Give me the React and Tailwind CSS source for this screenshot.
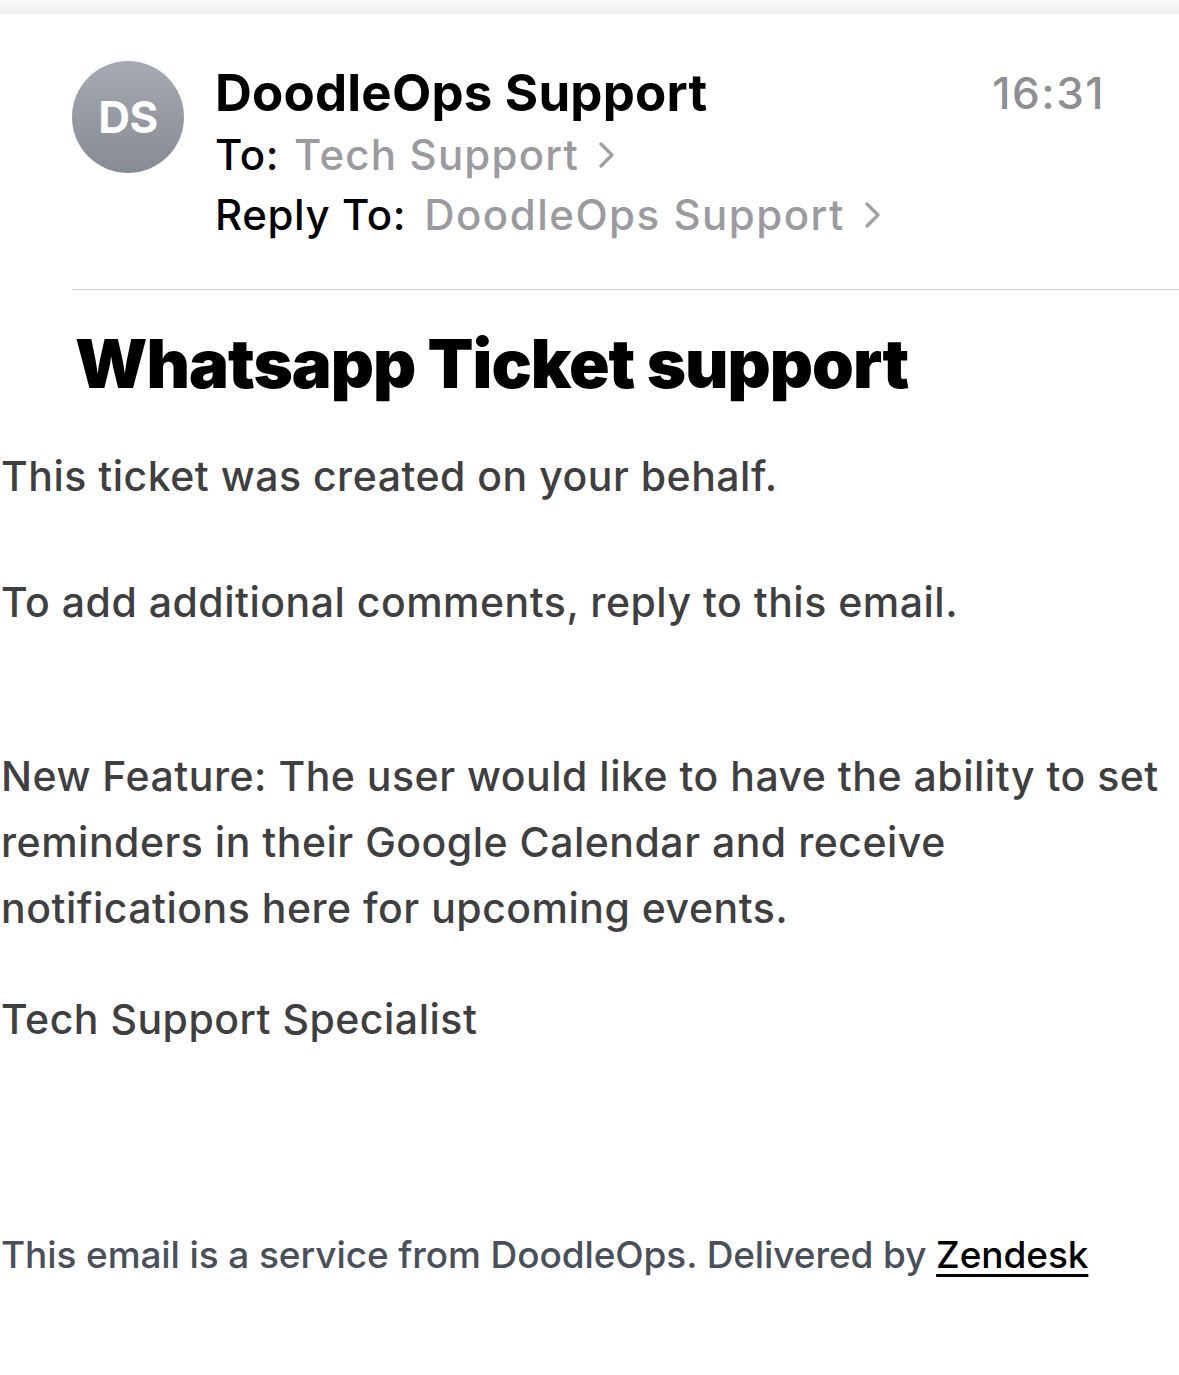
import React from 'react';

const Chevron = () => (
  <svg width="18" height="30" viewBox="0 0 18 30" className="ml-[18px] inline-block" fill="none">
    <path d="M4 4 L15 15 L4 26" stroke="#a1a1a6" strokeWidth="3.4" strokeLinecap="round" strokeLinejoin="round" />
  </svg>
);

export default function App() {
  return (
    <div className="min-h-[1375px] w-[1179px] bg-white font-['Inter',sans-serif] overflow-hidden">
      <div className="h-[14px] bg-gradient-to-b from-[#f8f8f8] to-[#f1f1f1]" />

      <div className="flex pl-[72px] pr-[74px] pt-[47px]">
        <div className="flex h-[112px] w-[112px] shrink-0 items-center justify-center rounded-full bg-gradient-to-b from-[#a6aab3] to-[#878b94]">
          <span className="text-[44px] font-bold tracking-[-0.5px] text-white">DS</span>
        </div>
        <div className="ml-[31px] flex-1">
          <div className="flex items-start justify-between">
            <div className="text-[51px] font-bold leading-[64px] tracking-[0.2px] text-black">DoodleOps Support</div>
            <div className="text-[44px] font-medium leading-[64px] tracking-[1.5px] text-[#8e8e93]">16:31</div>
          </div>
          <div className="flex items-center text-[42px] leading-[60px] tracking-[0.6px] text-black">
            <span className="font-medium">To:</span>
            <span className="ml-[15px] font-medium tracking-[1.2px] text-[#9b9b9f]">Tech Support</span>
            <Chevron />
          </div>
          <div className="flex items-center text-[42px] leading-[60px] tracking-[0.6px] text-black">
            <span className="font-medium">Reply To:</span>
            <span className="ml-[18px] font-medium tracking-[1.5px] text-[#9b9b9f]">DoodleOps Support</span>
            <Chevron />
          </div>
        </div>
      </div>

      <div className="ml-[72px] mt-[44px] h-px bg-[#cbcbcb]" />

      <h1 className="mt-[36px] pl-[75px] text-[67px] font-black leading-[76px] tracking-[-1px] text-black">
        Whatsapp Ticket support
      </h1>

      <div className="pl-[1px] pr-[10px] text-[41px] font-medium leading-[66px] text-[#3f3f3f] tracking-[0.5px]">
        <p className="mt-[41px]">This ticket was created on your behalf.</p>
        <p className="mt-[60px]">To add additional comments, reply to this email.</p>
        <p className="mt-[108px] whitespace-nowrap">
          New Feature: The user would like to have the ability to set
          <br />
          reminders in their Google Calendar and receive
          <br />
          notifications here for upcoming events.
        </p>
        <p className="mt-[45px]">Tech Support Specialist</p>
        <p className="mt-[170px] text-[37px] font-medium tracking-[-0.1px] text-[#4a5059]">
          This email is a service from DoodleOps. Delivered by{' '}
          <span className="text-black underline decoration-[3px] underline-offset-[6px]">Zendesk</span>
        </p>
      </div>
    </div>
  );
}
